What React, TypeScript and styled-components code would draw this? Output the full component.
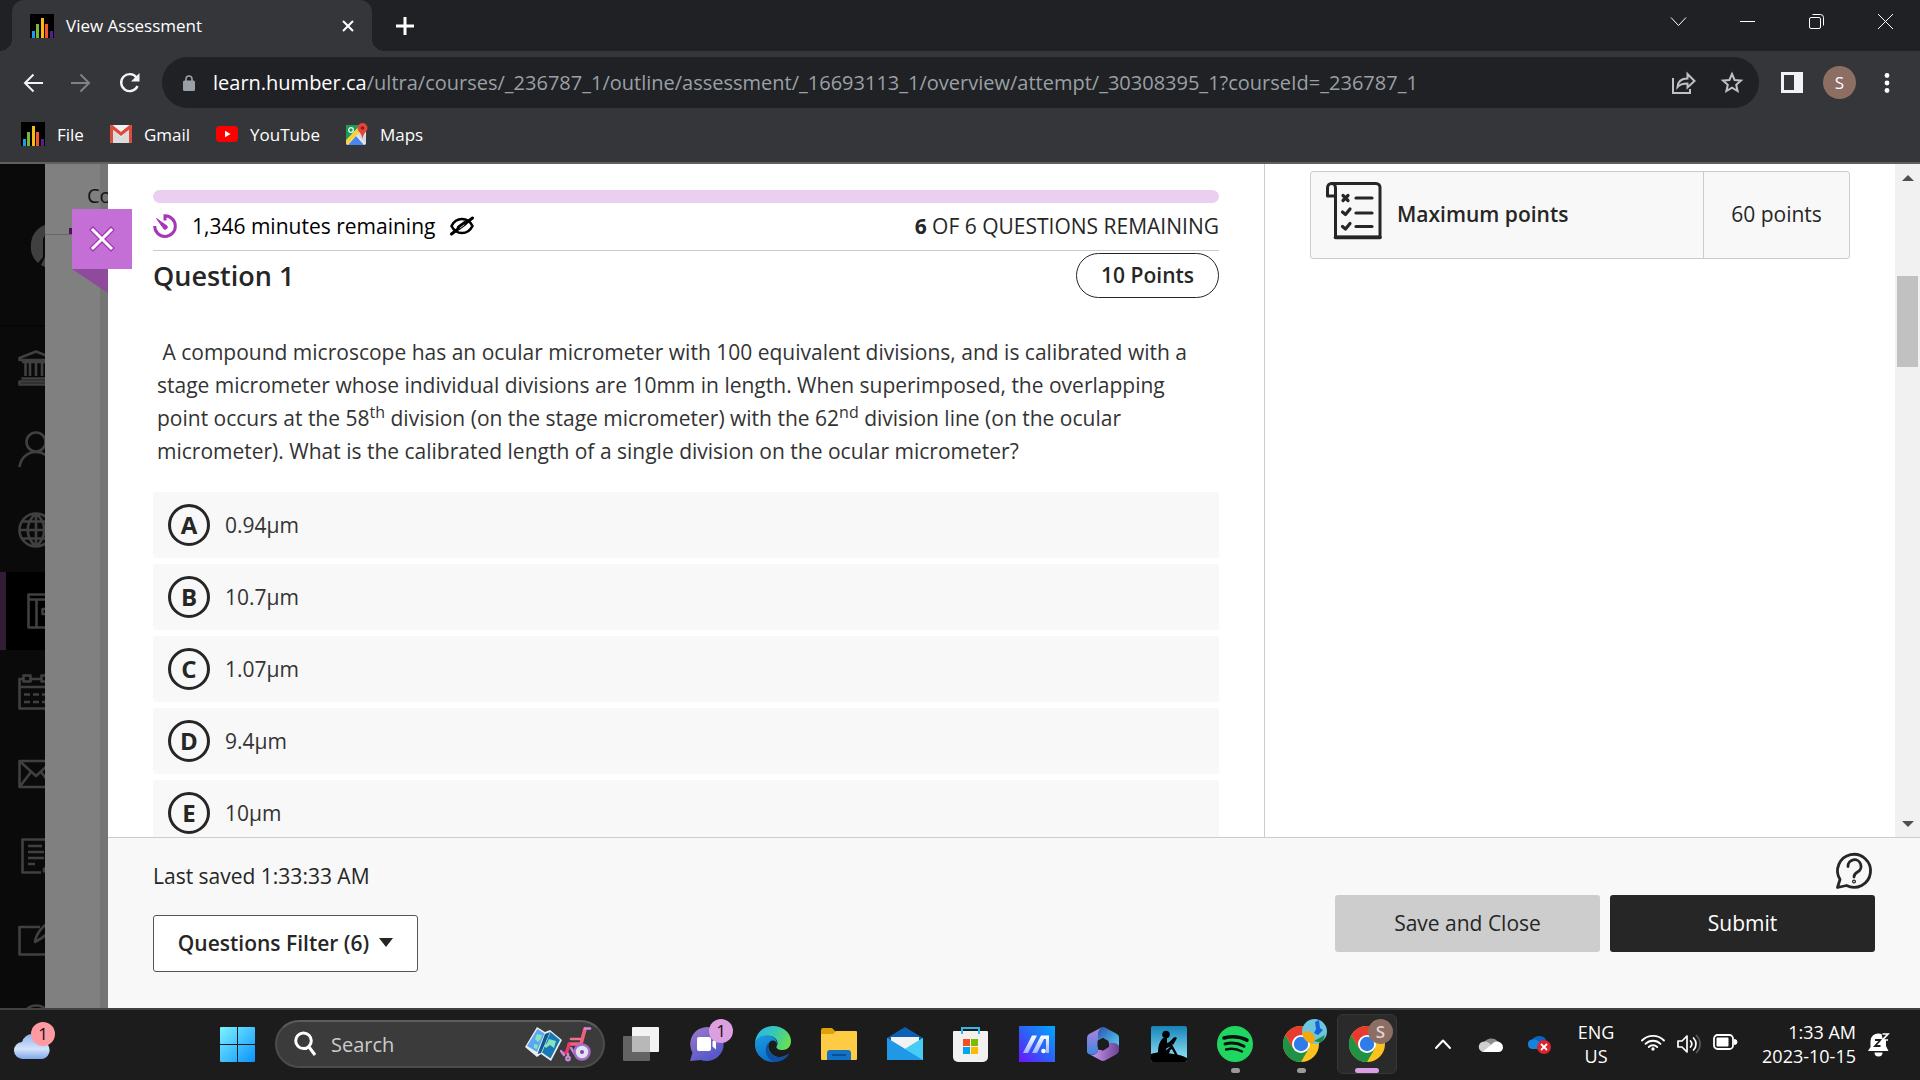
import React from "react";
import styled, { createGlobalStyle, css } from "styled-components";

const Global = createGlobalStyle`
  *, *::before, *::after { box-sizing: border-box; }
  html, body { margin: 0; padding: 0; }
  body { background: #1c1c1c; overflow: hidden; font-family: "Open Sans", "Noto Sans", sans-serif; }
  button { font: inherit; color: inherit; background: none; border: 0; padding: 0; cursor: pointer; }
  input { font: inherit; }
  a { color: inherit; text-decoration: none; }
  ul, ol, dl, dd, dt, h1, p { margin: 0; padding: 0; list-style: none; }
  svg { display: block; flex: none; overflow: visible; }
`;

/* ---------- layout ---------- */

const Screen = styled.div`
  display: flex;
  flex-direction: column;
  height: 100vh;
`;

/* ---------- browser chrome ---------- */

const TabStrip = styled.header`
  display: flex;
  justify-content: space-between;
  height: 51px;
  padding-left: 12px;
  background: #202124;
  color: #fff;
`;

const TabGroup = styled.div`
  display: flex;
`;

const Tab = styled.div`
  position: relative;
  display: flex;
  align-items: center;
  width: 360px;
  padding: 0 16px 0 18px;
  border-radius: 12px 12px 0 0;
  background: #35363a;
  font-size: 17px;

  &::before,
  &::after {
    content: "";
    position: absolute;
    bottom: 0;
    width: 12px;
    height: 12px;
  }
  &::before {
    right: 100%;
    background: radial-gradient(circle at 0 0, #202124 12px, #35363a 12px);
  }
  &::after {
    left: 100%;
    background: radial-gradient(circle at 100% 0, #202124 12px, #35363a 12px);
  }
`;

const TabTitle = styled.span`
  flex: 1;
  margin-left: 12px;
`;

const IconButton = styled.button<{ $w: number; $color?: string }>`
  display: flex;
  align-items: center;
  justify-content: center;
  flex: none;
  width: ${(p) => p.$w}px;
  color: ${(p) => p.$color ?? "inherit"};
`;

const WindowControls = styled.div`
  display: flex;
  padding-bottom: 8px;
`;

const Toolbar = styled.div`
  display: flex;
  align-items: center;
  height: 63px;
  padding: 0 9px;
  background: #35363a;
  color: #f1f3f4;
`;

const AddressBar = styled.div`
  display: flex;
  align-items: center;
  flex: 1;
  height: 51px;
  margin: 0 9px;
  padding: 0 3px 0 21px;
  border-radius: 26px;
  background: #202124;
  color: #9aa0a6;
`;

const Address = styled.div`
  flex: 1;
  margin-left: 18px;
  font-size: 20px;
  white-space: nowrap;

  b {
    font-weight: 400;
    color: #fff;
  }
`;

const Profile = styled.button`
  width: 33px;
  height: 33px;
  margin: 0 7px;
  border-radius: 50%;
  background: #8d6e63;
  font-size: 17px;
  color: #fff;
`;

const Bookmarks = styled.nav`
  display: flex;
  height: 50px;
  padding: 0 21px 8px;
  gap: 26px;
  border-bottom: 2px solid #5f6062;
  background: #35363a;
  color: #fff;
  font-size: 17px;
`;

const Bookmark = styled.a`
  display: flex;
  align-items: center;
  gap: 12px;
`;

/* ---------- course page ---------- */

const Page = styled.div`
  position: relative;
  display: flex;
  flex: 1;
  min-height: 0;
  overflow: hidden;
`;

const SideNav = styled.nav`
  flex: none;
  width: 45px;
  overflow: hidden;
  background: #0a0a0a;
  color: #404040;
`;

const SchoolLogo = styled.div`
  height: 163px;
  padding: 61px 0 0 31px;
  border-bottom: 2px solid #060606;
`;

const SideList = styled.ul<{ $row: number }>`
  li {
    display: flex;
    align-items: center;
    height: ${(p) => p.$row}px;
  }
`;

const SideLink = styled.a<{ $active?: boolean }>`
  display: flex;
  align-items: center;
  width: 100px;
  height: 78px;
  padding-left: 18px;
  ${(p) =>
    p.$active &&
    css`
      padding-left: 12px;
      border-left: 6px solid #321d36;
      background: #000;
    `}
`;

const Backdrop = styled.div`
  flex: none;
  width: 63px;
  overflow: hidden;
  background: linear-gradient(to left, #757575 8px, #808080 8px);
`;

const BackdropTabs = styled.div`
  height: 71px;
  padding: 18px 0 0 42px;
  border-bottom: 1px solid #666;
  font-size: 20px;
  line-height: 28px;
  color: #131313;
  white-space: nowrap;

  &::after {
    content: "";
    display: block;
    width: 36px;
    height: 6px;
    margin: 18px 0 0 -18px;
    background: #4f1259;
  }
`;

const ClosePanel = styled.button`
  position: absolute;
  top: 45px;
  left: 72px;
  display: flex;
  align-items: center;
  justify-content: center;
  width: 60px;
  height: 60px;
  background: #c46fd6;

  &::after {
    content: "";
    position: absolute;
    top: 100%;
    left: 0;
    border-top: 24px solid #8e4a9b;
    border-left: 36px solid transparent;
  }
`;

const Panel = styled.main`
  display: flex;
  flex-direction: column;
  flex: 1;
  min-width: 0;
  background: #fff;
  color: #262626;
`;

const PanelBody = styled.div`
  display: flex;
  flex: 1;
  min-height: 0;
`;

const Questions = styled.section`
  flex: 1;
  min-width: 0;
  padding: 26px 45px 0;
  overflow: hidden;
`;

const Progress = styled.div`
  height: 13px;
  border-radius: 7px;
  background: #ebcff0;
`;

const StatusRow = styled.div`
  display: flex;
  align-items: center;
  height: 48px;
  padding-bottom: 2px;
  border-bottom: 1px solid #ccc;
  font-size: 21px;
  color: #000;
`;

const TimeLeft = styled.span`
  margin: 0 15px;
`;

const Remaining = styled.span`
  margin-left: auto;
  color: #262626;

  b {
    font-weight: 700;
  }
`;

const QuestionHead = styled.div`
  display: flex;
  justify-content: space-between;
  align-items: center;
  margin-top: 2px;
`;

const QuestionTitle = styled.h1`
  font-size: 27px;
  line-height: 45px;
  font-weight: 600;
`;

const PointsPill = styled.span`
  padding: 0 24px;
  border: 1px solid #262626;
  border-radius: 23px;
  font-size: 21px;
  line-height: 43px;
  font-weight: 600;
`;

const Prompt = styled.p`
  margin: 38px 30px 0 4px;
  font-size: 21px;
  line-height: 33px;
  color: #333;

  sup {
    font-size: 16px;
    line-height: 0;
  }
`;

const Options = styled.div`
  display: grid;
  gap: 6px;
  margin-top: 24px;
`;

const Option = styled.label`
  display: flex;
  align-items: center;
  height: 66px;
  padding-left: 15px;
  border-radius: 3px;
  background: #f8f8f8;
  font-size: 21px;
  color: #333;
  cursor: pointer;
`;

const Radio = styled.input`
  appearance: none;
  width: 0;
  height: 0;
  margin: 0;
`;

const Letter = styled.span`
  display: grid;
  place-items: center;
  width: 42px;
  height: 42px;
  margin-right: 15px;
  border: 3px solid #262626;
  border-radius: 50%;
  font-size: 24px;
  line-height: 36px;
  font-weight: 700;
  color: #262626;
`;

const Details = styled.aside`
  flex: none;
  width: 631px;
  padding: 7px 45px 0;
  border-left: 1px solid #ccc;
`;

const PointsCard = styled.dl`
  display: flex;
  height: 88px;
  border: 1px solid #ccc;
  border-radius: 3px;
  background: #f8f8f8;
  font-size: 21px;

  dt {
    display: flex;
    align-items: center;
    gap: 15px;
    flex: 1;
    padding: 0 0 2px 15px;
    font-weight: 600;
  }
  dd {
    display: grid;
    place-items: center;
    width: 146px;
    padding-bottom: 2px;
    border-left: 1px solid #ccc;
  }
`;

const ChecklistIcon = styled.svg`
  align-self: flex-start;
  margin-top: 10px;
`;

const ScrollTrack = styled.div`
  display: flex;
  flex-direction: column;
  justify-content: space-between;
  flex: none;
  width: 25px;
  background: #f1f1f1;
`;

const ScrollArrow = styled.button`
  display: grid;
  place-items: center;
  height: 27px;
`;

const ScrollThumb = styled.div`
  width: 21px;
  height: 91px;
  margin: 85px 2px auto;
  background: #c1c1c1;
`;

const Footer = styled.footer`
  display: flex;
  justify-content: space-between;
  height: 171px;
  padding: 15px 45px 0;
  border-top: 1px solid #ccc;
  background: #f8f8f8;
  font-size: 21px;
`;

const FooterStart = styled.div`
  padding-top: 7px;
`;

const Saved = styled.p`
  margin-bottom: 23px;
  line-height: 32px;
`;

const FooterButton = styled.button<{ $look: "outline" | "grey" | "dark" }>`
  display: flex;
  align-items: center;
  justify-content: center;
  gap: 10px;
  width: 265px;
  height: 57px;
  padding-bottom: 2px;
  border-radius: 3px;
  ${(p) => p.$look === "outline" && css`border: 1px solid #555; background: #fff; font-weight: 600;`}
  ${(p) => p.$look === "grey" && css`background: #cdcdcd;`}
  ${(p) => p.$look === "dark" && css`background: #262626; color: #fff;`}
`;

const FooterEnd = styled.div`
  display: flex;
  flex-direction: column;
  align-items: flex-end;
  gap: 6px;
`;

const HelpButton = styled.button`
  margin-right: 3px;
`;

const Actions = styled.div`
  display: flex;
  gap: 10px;
`;

/* ---------- taskbar ---------- */

const Taskbar = styled.footer`
  display: flex;
  align-items: center;
  flex: none;
  height: 72px;
  padding: 0 30px 2px 14px;
  border-top: 2px solid #414141;
  background: #1c1c1c;
  color: #fff;
`;

const Weather = styled.button`
  position: relative;
  margin-right: 168px;
`;

const Badge = styled.span<{ $color: string; $side: number }>`
  position: absolute;
  top: -7px;
  right: ${(p) => p.$side}px;
  width: 24px;
  height: 24px;
  border-radius: 50%;
  background: ${(p) => p.$color};
  font-size: 17px;
  line-height: 24px;
  text-align: center;
  color: #111;
`;

const SearchBox = styled.label`
  display: flex;
  align-items: center;
  width: 330px;
  height: 48px;
  margin: 0 6px 0 20px;
  padding: 0 12px 0 17px;
  border: 2px solid #4c4c4c;
  border-top-color: #5c5c5c;
  border-radius: 24px;
  background: #3b3b3b;
`;

const SearchInput = styled.input`
  flex: 1;
  min-width: 0;
  margin-left: 15px;
  padding: 0;
  border: 0;
  outline: 0;
  background: none;
  font-size: 20px;
  color: #fff;

  &::placeholder {
    color: #ccc;
    opacity: 1;
  }
`;

const Apps = styled.div`
  display: flex;
  gap: 6px;
`;

const AppButton = styled.button<{ $active?: boolean; $running?: boolean }>`
  position: relative;
  display: grid;
  place-items: center;
  width: 60px;
  height: 60px;
  border: 1px solid transparent;
  border-radius: 6px;
  ${(p) => p.$active && css`border-color: #373737; background: #2a2a2a;`}

  &::after {
    content: "";
    position: absolute;
    bottom: 0;
    width: ${(p) => (p.$active ? 24 : 9)}px;
    height: 5px;
    border-radius: 3px;
    background: ${(p) => (p.$active ? "#dc9fe6" : p.$running ? "#9a9a9a" : "transparent")};
  }
`;

const AppIcon = styled.span`
  position: relative;
  display: block;
`;

const ProfileBadge = styled.span<{ $color: string }>`
  position: absolute;
  top: -7px;
  right: -8px;
  width: 25px;
  height: 25px;
  border-radius: 50%;
  overflow: hidden;
  background: ${(p) => p.$color};
  font-size: 17px;
  line-height: 25px;
  font-weight: 600;
  text-align: center;
  color: #e0d5d1;
`;

const Tray = styled.div`
  display: flex;
  align-items: center;
  margin-left: auto;
  font-size: 18px;
  line-height: 24px;
`;

const TrayButton = styled.button<{ $gap: number }>`
  display: flex;
  gap: 12px;
  margin-right: ${(p) => p.$gap}px;
`;

const Lang = styled.button`
  width: 40px;
  margin: 0 25px;
  text-align: center;
`;

const Clock = styled.button`
  margin-right: 12px;
  text-align: right;
`;

/* ---------- drawings ---------- */

const BarsIcon = () => (
  <svg width="24" height="24" viewBox="0 0 24 24">
    <rect width="24" height="24" fill="#000" />
    <rect x="2" y="17" width="3" height="7" fill="#1a9bef" />
    <rect x="6" y="10" width="3" height="14" fill="#7ab82e" />
    <rect x="11" y="4" width="3" height="20" fill="#fdb913" />
    <rect x="15" y="10" width="3" height="14" fill="#f2562a" />
    <rect x="20" y="17" width="3" height="7" fill="#5b1d87" />
  </svg>
);

const Line = ({ w, h, d, sw = 2, cap = "butt" }: { w: number; h: number; d: string; sw?: number; cap?: "butt" | "round" }) => (
  <svg width={w} height={h} viewBox={`0 0 ${w} ${h}`} fill="none" stroke="currentColor" strokeWidth={sw} strokeLinecap={cap} strokeLinejoin={cap === "round" ? "round" : "miter"}>
    <path d={d} />
  </svg>
);

const GmailIcon = () => (
  <svg width="22" height="18" viewBox="0 0 22 18">
    <rect width="22" height="18" rx="2" fill="#f1f1f1" />
    <path d="M3 18V5l8 7 8-7v13" fill="#dcdcdc" />
    <path d="M0 2v14a2 2 0 0 0 2 2h1V4.800l8 6.200 8-6.200V18h1a2 2 0 0 0 2-2V2c0-2-2-2.500-3-1.700L11 6.800 3 .3C2-.5 0 0 0 2z" fill="#dd4b3e" />
    <path d="M3 .3 11 6.800 19 .3z" fill="#f1f1f1" />
  </svg>
);

const YouTubeIcon = () => (
  <svg width="22" height="16" viewBox="0 0 22 16">
    <rect width="22" height="16" rx="4" fill="#f00" />
    <path d="M9 4.800v6.400L14.500 8z" fill="#fff" />
  </svg>
);

const MapsIcon = () => (
  <svg width="22" height="22" viewBox="0 0 22 22">
    <rect y="2" width="20" height="20" rx="2" fill="#e8eaed" />
    <path d="M0 4a2 2 0 0 1 2-2h12L0 18z" fill="#1a9c57" />
    <path d="M2 22 10 13l8 9z" fill="#4a86f0" />
    <path d="M0 17 13 4l3 3L1.500 21.500A2 2 0 0 1 0 20z" fill="#fbd13b" />
    <path d="M0 4a2 2 0 0 1 2-2h12L0 16z" fill="#1a9c57" />
    <path d="M11 12 20 21V13l-4-4z" fill="#d5d8dc" />
    <circle cx="5" cy="7" r="2.300" fill="none" stroke="#fff" strokeWidth="1.200" />
    <path d="M16.500 0a5 5 0 0 0-5 5c0 3.500 4.300 5 5 11 .7-6 5-7.500 5-11a5 5 0 0 0-5-5z" fill="#e5453a" />
    <circle cx="16.500" cy="5" r="1.800" fill="#8c1f17" />
  </svg>
);

const TimerIcon = () => (
  <svg width="24" height="24" viewBox="0 0 24 24" fill="none" stroke="#a636b8" strokeWidth="3">
    <path d="M12 6.500V1.800A10.300 10.300 0 1 1 1.700 12" />
    <path d="M3.500 4.500 14 12a2.200 2.200 0 0 1-3 3z" fill="#a636b8" strokeWidth="1" strokeLinejoin="round" />
  </svg>
);

const HiddenEyeIcon = () => (
  <svg width="24" height="18" viewBox="0 0 24 18" fill="none" stroke="#000" strokeWidth="2.600" strokeLinecap="round">
    <path d="M1.500 9C4 4 8 2 12 2s8 2 10.500 7C20 14 16 16 12 16S4 14 1.500 9z" />
    <path d="M1.500 17 22.500 1" strokeWidth="3" />
    <path d="M9 10.500 14.500 6.500" strokeWidth="4.500" />
    <path d="M10 11 14 8" stroke="#fff" strokeWidth=".8" />
  </svg>
);

const Checklist = () => (
  <ChecklistIcon width="56" height="57" viewBox="0 0 56 57" fill="none" stroke="#262626" strokeWidth="3" strokeLinejoin="round" strokeLinecap="round">
    <path d="M6 1.500H50a4 4 0 0 1 4 4V55H9.500V6c0-6-8-6-8 0v8h8" />
    <path d="M9.500 55.500H54" strokeWidth="3.600" />
    <path d="m17 13.500 5 5M22 13.500l-5 5M16.500 30l3 2.500 4.500-5.500M16.500 44.500l3 2.500 4.500-5.500" strokeWidth="3.200" />
    <path d="M30 16H46M30 31H46M30 44.500H46" strokeWidth="3.200" />
  </ChecklistIcon>
);

const HelpIcon = () => (
  <svg width="36" height="36" viewBox="0 0 36 36" fill="none" stroke="#262626" strokeWidth="2.800" strokeLinecap="round" strokeLinejoin="round">
    <path d="M1.500 34.500 4 26.500A16.500 16.500 0 1 1 10.500 32.500z" />
    <path d="M12 13.500a6.500 6.500 0 1 1 9.500 5.500c-2.500 1.300-3.500 2-3.500 5" />
    <circle cx="18" cy="28.500" r=".6" />
  </svg>
);

const WeatherIcon = () => (
  <svg width="38" height="30" viewBox="0 0 38 30">
    <defs>
      <linearGradient id="cloud" x1="0" y1="0" x2="0" y2="1">
        <stop offset="0" stopColor="#8fb2ee" />
        <stop offset=".6" stopColor="#d3e3fb" />
        <stop offset="1" stopColor="#7fa6ea" />
      </linearGradient>
    </defs>
    <path d="M9 30a8.500 8.500 0 0 1-1-17A11 11 0 0 1 29 12.500 9 9 0 0 1 28.500 30z" fill="url(#cloud)" />
  </svg>
);

const StartIcon = () => (
  <svg width="35" height="35" viewBox="0 0 35 35">
    <defs>
      <linearGradient id="win" x1="0" y1="0" x2="1" y2="1">
        <stop offset="0" stopColor="#7df2ff" />
        <stop offset="1" stopColor="#0a93ff" />
      </linearGradient>
    </defs>
    <path d="M1 0H17V17H0V1a1 1 0 0 1 1-1zM18 0H34a1 1 0 0 1 1 1V17H18zM0 18H17V35H1a1 1 0 0 1-1-1zM18 18H35V34a1 1 0 0 1-1 1H18z" fill="url(#win)" />
  </svg>
);

const SearchArt = () => (
  <svg width="66" height="36" viewBox="0 0 66 36">
    <path d="M12 1 20 6 25 4 37 14 26 35 16 28 12 31 0 21z" fill="#e9eef0" />
    <path d="M12.500 3 19.500 7.500 12 26 2 20z" fill="#5ba7f5" />
    <path d="M20 8 25 6 16 27 12.500 28z" fill="#0c5a8e" />
    <path d="M25.500 6 35 14 25.500 32.500 17 26.500z" fill="#1678b5" />
    <path d="m12 8 5 1-1 4-3 3-3-3zM9 18l4 1-1 4-3-1zM24 13l7 2-2 7-4-3-4 3-2-2 3-3z" fill="#86e3ba" />
    <g fill="none" strokeLinecap="round" strokeLinejoin="round">
      <path d="M60 3 56 18H45" stroke="#f1607f" strokeWidth="3.600" />
      <path d="M46 13H55" stroke="#f3718c" strokeWidth="2.600" />
      <path d="M60 2.500H65" stroke="#d389de" strokeWidth="2.600" />
      <path d="M44 18 41.500 27H38" stroke="#f3366c" strokeWidth="3.200" />
      <path d="M46 22 49 27M36 25 39 29M43 28V30" stroke="#c58bdb" strokeWidth="2.400" />
      <circle cx="57" cy="26" r="7.500" fill="#dfe3f2" stroke="#a76bc4" strokeWidth="2.500" />
      <circle cx="57" cy="26" r="2" fill="#7d45a5" stroke="none" />
      <circle cx="43" cy="32.500" r="1.800" stroke="#c58bdb" strokeWidth="2.200" />
    </g>
  </svg>
);

const TaskViewIcon = () => (
  <svg width="36" height="36" viewBox="0 0 36 36">
    <rect x="9" y="1" width="27" height="25" rx="1" fill="#f3f3f3" />
    <rect y="10" width="27" height="25" rx="1" fill="#636363" />
    <path d="M9 10H27V26H9z" fill="#b8b8b8" />
  </svg>
);

const ChatIcon = () => (
  <svg width="36" height="36" viewBox="0 0 36 36">
    <defs>
      <linearGradient id="chat" x1="0" y1="0" x2=".6" y2="1">
        <stop offset="0" stopColor="#a07ac8" />
        <stop offset="1" stopColor="#5257c9" />
      </linearGradient>
    </defs>
    <path d="M18 1a17 17 0 1 1-6 33L1 35l2.500-8.500A17 17 0 0 1 18 1z" fill="url(#chat)" />
    <rect x="8" y="11" width="14" height="14" rx="2" fill="#fff" />
    <path d="M23.500 15.500 27 12.500v11l-3.500-3z" fill="#fff" />
  </svg>
);

const EdgeIcon = () => (
  <svg width="36" height="36" viewBox="0 0 36 36">
    <defs>
      <linearGradient id="edgeTop" x1="0" y1=".3" x2="1" y2=".6">
        <stop offset="0" stopColor="#2eb6ea" />
        <stop offset=".5" stopColor="#35c9b5" />
        <stop offset="1" stopColor="#6be04b" />
      </linearGradient>
      <linearGradient id="edgeLow" x1="0" y1="0" x2=".6" y2="1">
        <stop offset="0" stopColor="#1b9de2" />
        <stop offset="1" stopColor="#0a68c4" />
      </linearGradient>
    </defs>
    <path d="M0 17C1 6 9 0 18 0c10 0 18 7 18 15 0 6-4 9-8.500 9-5 0-6.500-2-6-3.500C24 17 22 11 15 10 8 9 2 12 0 17z" fill="url(#edgeTop)" />
    <path d="M0 18C1 11 8 8 15 10c5 1 7 4 7 8-1-4-6-5-8-1-3 7 4 14 11 14 4 0 7-2 9-3-3 5-9 8-16 8C7 36-.5 27 0 18z" fill="url(#edgeLow)" />
    <path d="M14 16.500c-2 4-1 9 3 12 5 4 11 3 17-1-3 5-8 8.500-14 8-9-1-12-14-6-19z" fill="#114f9f" />
  </svg>
);

const ExplorerIcon = () => (
  <svg width="36" height="36" viewBox="0 0 36 36">
    <path d="M0 4a2 2 0 0 1 2-2H11l4 4v6H0z" fill="#e0a008" />
    <path d="M0 8H12l3-3H35a1 1 0 0 1 1 1V33a1 1 0 0 1-1 1H1a1 1 0 0 1-1-1z" fill="#fdcb44" />
    <path d="M6 34V27a3 3 0 0 1 3-3H27a3 3 0 0 1 3 3v7z" fill="#1272c6" />
    <path d="M11 29H25" stroke="#0a4f94" strokeWidth="2" />
  </svg>
);

const MailIcon = () => (
  <svg width="36" height="36" viewBox="0 0 36 36">
    <path d="M0 12 18 1 36 12V22H0z" fill="#0b5fb5" />
    <path d="M4 11H32V24H4z" fill="#f2f2f2" />
    <path d="M0 12 18 23 36 12V34H0z" fill="#2fb6f2" />
    <path d="M0 12 36 34H0z" fill="#1f98e6" />
    <path d="M36 12 18 23 36 34z" fill="#45cdf6" />
  </svg>
);

const StoreIcon = () => (
  <svg width="36" height="36" viewBox="0 0 36 36">
    <path d="M0 6a1 1 0 0 1 1-1H34a1 1 0 0 1 1 1V31a5 5 0 0 1-5 5H5a5 5 0 0 1-5-5z" fill="#f1f1f1" />
    <path d="M9 8V2H26V8" fill="none" stroke="#2fb9e6" strokeWidth="2" />
    <path d="M10 13h7v7h-7z" fill="#f25022" />
    <path d="M18 13h7v7h-7z" fill="#7fba00" />
    <path d="M10 21h7v7h-7z" fill="#00a4ef" />
    <path d="M18 21h7v7h-7z" fill="#ffb900" />
  </svg>
);

const MyAsusIcon = () => (
  <svg width="36" height="36" viewBox="0 0 36 36">
    <defs>
      <linearGradient id="asus" x1="0" y1="1" x2="1" y2="0">
        <stop offset="0" stopColor="#6a14ff" />
        <stop offset=".5" stopColor="#2c62f5" />
        <stop offset="1" stopColor="#00a8ff" />
      </linearGradient>
      <linearGradient id="asusMark" x1="0" y1="0" x2="0" y2="1">
        <stop offset="0" stopColor="#fff" />
        <stop offset="1" stopColor="#9db4ff" />
      </linearGradient>
    </defs>
    <rect width="36" height="36" fill="url(#asus)" />
    <path d="M4 27 13 9.500H18L9 27zM13 27 22 9.500H30V27H27V13H25L18 27z" fill="url(#asusMark)" />
    <circle cx="24.500" cy="25" r="2.300" fill="#fff" />
  </svg>
);

const OfficeIcon = () => (
  <svg width="36" height="36" viewBox="0 0 36 36">
    <defs>
      <linearGradient id="offA" x1="0" y1="0" x2="0" y2="1">
        <stop offset="0" stopColor="#b682dd" />
        <stop offset="1" stopColor="#3e86e0" />
      </linearGradient>
      <linearGradient id="offB" x1="0" y1="0" x2="1" y2="1">
        <stop offset="0" stopColor="#2a50a8" />
        <stop offset="1" stopColor="#58d5fb" />
      </linearGradient>
      <linearGradient id="offC" x1="0" y1="0" x2="1" y2="0">
        <stop offset="0" stopColor="#cf9cf5" />
        <stop offset="1" stopColor="#6b4394" />
      </linearGradient>
    </defs>
    <path d="M16 1.500a5 5 0 0 1 4 0L32 8a4 4 0 0 1 2 4V22L24 17 18 12l-6 3V4z" fill="url(#offB)" />
    <path d="M34 20v4a4 4 0 0 1-2 4L20 34.500a5 5 0 0 1-4 0L5 28.500c4 1 8-1 8-5l5 1 6-4V17c4-1 9 0 10 3z" fill="url(#offC)" />
    <path d="M17 1.200 4 8a5 5 0 0 0-2 4V24a4 4 0 0 0 3 4.500c5 1 8-2 8-5V8c0-3 2-6 4-6.800z" fill="url(#offA)" />
    <path d="M18 12 23.500 15v6L18 24.500 12.500 21V15z" fill="#1c1c1c" />
  </svg>
);

const KindleIcon = () => (
  <svg width="36" height="36" viewBox="0 0 36 36">
    <defs>
      <linearGradient id="kindle" x1="0" y1="0" x2="0" y2="1">
        <stop offset="0" stopColor="#1583b8" />
        <stop offset="1" stopColor="#9beafb" />
      </linearGradient>
    </defs>
    <rect width="36" height="36" rx="2" fill="url(#kindle)" />
    <path d="M0 28c5-2 12-2 17-1s14 2 19 5v2a2 2 0 0 1-2 2H2a2 2 0 0 1-2-2z" fill="#000" />
    <circle cx="15" cy="8.500" r="3.800" />
    <path d="M12 12c-4 4-5 9-5 15H18l1-2-4-1 1-4 4-2-1-2-3 1V12z" fill="#000" />
    <path d="M11 23 20 19 26 30M21 21 14 27M18 18 24 12" fill="none" stroke="#000" strokeWidth="2.400" />
    <path d="m19 16 5-5 2 1-4 7z" fill="#000" />
  </svg>
);

const SpotifyIcon = () => (
  <svg width="36" height="36" viewBox="0 0 36 36">
    <circle cx="18" cy="18" r="18" fill="#1fd760" />
    <g fill="none" stroke="#111" strokeLinecap="round">
      <path d="M7 12c8-2 16-1.500 23 2.200" strokeWidth="3.600" />
      <path d="M8 18c7-1.800 13-1 19 2.200" strokeWidth="3" />
      <path d="M9 23.500c6-1.500 11-.8 16 2" strokeWidth="2.400" />
    </g>
  </svg>
);

const ChromeIcon = () => (
  <svg width="36" height="36" viewBox="0 0 36 36">
    <circle cx="18" cy="18" r="18" fill="#fcc31e" />
    <path d="M18 18 10.200 22.500 2.400 9A18 18 0 0 0 18 36L25.800 22.500z" fill="#1f9246" />
    <path d="M2.400 9A18 18 0 0 1 33.600 9H18L10.200 22.500z" fill="#e63b2e" />
    <circle cx="18" cy="18" r="9" fill="#fff" />
    <circle cx="18" cy="18" r="7.200" fill="#2f7bea" />
  </svg>
);

const CloudIcon = () => (
  <svg width="24" height="16" viewBox="0 0 24 16">
    <path d="M5 7a8 7.500 0 0 1 14-1l-8 6z" fill="#8d8d8d" />
    <path d="M5 16a5 5 0 0 1 0-10.500c3-.5 5 1 7 3L7 16z" fill="#cfcfcf" />
    <path d="M4 15.500 13 8c4-5 11-2 11 3.500a4.500 4.500 0 0 1-4.500 4.500H5z" fill="#fff" />
  </svg>
);

const OneDriveErrorIcon = () => (
  <svg width="24" height="20" viewBox="0 0 24 20">
    <path d="M5 6.500A8 7.500 0 0 1 19 5.500l-6 6z" fill="#0b64bd" />
    <path d="M5 15A4.800 4.800 0 0 1 5 5.500c6-1 8 4 12 9.500z" fill="#1583dc" />
    <circle cx="17" cy="13" r="7" fill="#d9252f" />
    <path d="m14 10 6 6M20 10l-6 6" stroke="#fff" strokeWidth="1.800" />
  </svg>
);

const WifiIcon = () => (
  <svg width="24" height="17" viewBox="0 0 24 17" fill="none" stroke="#fff" strokeWidth="1.900" strokeLinecap="round">
    <path d="M1 6.500a15.500 15.500 0 0 1 22 0M4.500 9.800a10.600 10.600 0 0 1 15 0M7.800 13a6 6 0 0 1 8.400 0" />
    <circle cx="12" cy="15" r="1.700" fill="#fff" stroke="none" />
  </svg>
);

const VolumeIcon = () => (
  <svg width="24" height="20" viewBox="0 0 24 20" fill="none" stroke="#fff" strokeWidth="1.700" strokeLinecap="round" strokeLinejoin="round">
    <path d="M1 7H5L10 2V18L5 13H1z" />
    <path d="M13.500 7a4.500 4.500 0 0 1 0 6M16.500 4a8.500 8.500 0 0 1 0 12" />
    <path d="M19.500 1.500a12 12 0 0 1 0 17" stroke="#5a5a5a" />
  </svg>
);

const BatteryIcon = () => (
  <svg width="24" height="16" viewBox="0 0 24 16">
    <rect x="1" y="1" width="19" height="14" rx="3.500" fill="none" stroke="#fff" strokeWidth="1.800" />
    <rect x="3.500" y="3.500" width="12" height="9" rx="1" fill="#fff" />
    <path d="M21.500 5.500a2.500 2.500 0 0 1 0 5z" fill="#fff" stroke="#fff" />
  </svg>
);

const BellIcon = () => (
  <svg width="22" height="24" viewBox="0 0 22 24">
    <path d="M2.500 9a7.500 7.500 0 0 1 8-7.500C15 1.500 18 5 18 9v5l2.500 5H0l2.500-4z" fill="#fff" />
    <path d="M6.500 20.500h8a4 4 0 0 1-8 0z" fill="#fff" />
    <path d="M7 8h5.500L7 14h5.500" fill="none" stroke="#1c1c1c" strokeWidth="1.800" />
    <path d="M13 0h8v8h-6z" fill="#1c1c1c" />
    <path d="M14.500 2H20l-5.500 6H20" fill="none" stroke="#fff" strokeWidth="1.700" />
  </svg>
);

const Side = ({ children }: { children: React.ReactNode }) => (
  <svg width="36" height="36" viewBox="0 0 36 36" fill="none" stroke="currentColor" strokeWidth="2.600" strokeLinejoin="round">
    {children}
  </svg>
);

const upperNav = [
  { name: "Institution", art: <path d="M1.500 8 18 1.500 34.500 8v2h-33zM4 12H32M7.500 13V26M12 13V26M18 13V26M24 13V26M29 13V26M3.500 28.500H33M1.500 34.500V31.500H34.500V34.500z" /> },
  { name: "Profile", art: <path d="M18 1.500a9.500 9.500 0 1 1 0 19 9.500 9.500 0 0 1 0-19zM1.500 36C3 26 10 21 18 21s15 5 16.500 15" /> },
  { name: "Activity", art: <path d="M18 1.500a16.500 16.500 0 1 1 0 33 16.500 16.500 0 0 1 0-33zM18 1.500V34.500M1.500 18H34.500M4 9.500H32M4 26.500H32M18 1.500c-11 9-11 24 0 33M18 1.500c11 9 11 24 0 33" /> },
  { name: "Courses", active: true, art: <path d="M10.500 1.500H38V34.500H10.500zM10.500 6.500H38M18.500 7V34.500M38 16H24.500V21H38" /> },
];

const lowerNav = [
  { name: "Calendar", art: <path d="M5 5H1.500V34.500H34.500V5H31M12 5h11M1.500 13H34.500M5.500 1.500h7v6h-7zM23.500 1.500h7v6h-7zM6 20.500h6M15 20.500h6M24 20.500h6M6 28h6M15 28h6M24 28h6" /> },
  { name: "Messages", art: <path d="M1.500 5H34.500V31H1.500zM1.500 5 18 20 34.500 5M1.500 31 13 16M34.500 31 23 16" /> },
  { name: "Grades", art: <path d="M23 34.500H4.500V1.500H33V24M10 8H24M10 14H26M10 20H26M10 26H17M26 34.500V31l9-7" /> },
  { name: "Tools", art: <path d="M22 7H1.500V34.500H30V22M17 22C18 14 24 6 32 2l3 3C32 12 25 18 17 22z" /> },
  { name: "Sign Out", art: <path d="M8 8c5-6 16-6 20 0M8 30c5 6 16 6 20 0" /> },
];

const answers = [
  ["A", "0.94µm"],
  ["B", "10.7µm"],
  ["C", "1.07µm"],
  ["D", "9.4µm"],
  ["E", "10µm"],
];

export default function App() {
  return (
    <Screen>
      <Global />
      <TabStrip>
        <TabGroup>
          <Tab>
            <BarsIcon />
            <TabTitle>View Assessment</TabTitle>
            <IconButton $w={16} aria-label="Close tab"><Line w={12} h={12} d="M1 1 11 11M11 1 1 11" /></IconButton>
          </Tab>
          <IconButton $w={66} aria-label="New tab"><Line w={18} h={18} sw={3} d="M9 0V18M0 9H18" /></IconButton>
        </TabGroup>
        <WindowControls>
          <IconButton $w={69} aria-label="Search tabs"><Line w={15} h={9} sw={1} d="M0 .5 7.500 8.500 15 .5" /></IconButton>
          <IconButton $w={69} aria-label="Minimize"><Line w={15} h={1} sw={1} d="M0 .5H15" /></IconButton>
          <IconButton $w={69} aria-label="Restore"><Line w={15} h={15} sw={1} d="M2 3.500h8a1.500 1.500 0 0 1 1.500 1.500v8a1.500 1.500 0 0 1-1.500 1.500H2A1.500 1.500 0 0 1 .5 13V5A1.500 1.500 0 0 1 2 3.500zM3.500 .5H11.500a3 3 0 0 1 3 3V11.500" /></IconButton>
          <IconButton $w={69} aria-label="Close window"><Line w={15} h={15} sw={1} d="M0 0 15 15M15 0 0 15" /></IconButton>
        </WindowControls>
      </TabStrip>
      <Toolbar>
        <IconButton $w={48} aria-label="Back"><Line w={20} h={18} sw={2} d="M20 9H2M10.500 .5 2 9 10.500 17.500" /></IconButton>
        <IconButton $w={48} $color="#808185" aria-label="Forward"><Line w={20} h={18} sw={2} d="M0 9H18M9.500 .5 18 9 9.500 17.500" /></IconButton>
        <IconButton $w={48} aria-label="Reload">
          <svg width="21" height="20" viewBox="0 0 21 20">
            <path d="M17.500 4.500A8.500 8.500 0 1 0 18.500 13" fill="none" stroke="currentColor" strokeWidth="2.400" />
            <path d="M20.500 0V8.500H12z" fill="currentColor" />
          </svg>
        </IconButton>
        <AddressBar>
          <svg width="12" height="16" viewBox="0 0 12 16">
            <path d="M3 7V4a3 3 0 0 1 6 0V7" fill="none" stroke="#9aa0a6" strokeWidth="1.600" />
            <rect y="5.500" width="12" height="10.500" rx="1.500" fill="#9aa0a6" />
          </svg>
          <Address><b>learn.humber.ca</b>/ultra/courses/_236787_1/outline/assessment/_16693113_1/overview/attempt/_30308395_1?courseId=_236787_1</Address>
          <IconButton $w={48} $color="#c0c1c3" aria-label="Share"><Line w={24} h={22} sw={2} d="M1 6V21H18V17M5.500 15C6 9 9.500 6.500 15.500 6.500V2L22.500 9 15.500 15.500V11.500C11 11.500 8 12 5.500 15z" /></IconButton>
          <IconButton $w={48} $color="#c0c1c3" aria-label="Bookmark"><Line w={22} h={21} sw={2} d="M11 2 13.600 8 20 8.600 15.200 12.800 16.600 19 11 15.700 5.400 19 6.800 12.800 2 8.600 8.400 8z" /></IconButton>
        </AddressBar>
        <IconButton $w={48} aria-label="Side panel">
          <svg width="22" height="21" viewBox="0 0 22 21"><path d="M0 0H22V21H0zM3 3V18H13V3z" fill="#f1f3f4" fillRule="evenodd" /></svg>
        </IconButton>
        <Profile>S</Profile>
        <IconButton $w={48} aria-label="Menu">
          <svg width="6" height="20" viewBox="0 0 6 20" fill="#fff"><circle cx="3" cy="2.500" r="2.400" /><circle cx="3" cy="10" r="2.400" /><circle cx="3" cy="17.500" r="2.400" /></svg>
        </IconButton>
      </Toolbar>
      <Bookmarks>
        <Bookmark href="#"><BarsIcon />File</Bookmark>
        <Bookmark href="#"><GmailIcon />Gmail</Bookmark>
        <Bookmark href="#"><YouTubeIcon />YouTube</Bookmark>
        <Bookmark href="#"><MapsIcon />Maps</Bookmark>
      </Bookmarks>

      <Page>
        <SideNav>
          <SchoolLogo>
            <svg width="42" height="42" viewBox="0 0 42 42"><path d="M0 20A21 21 0 0 1 14 0V10L12 14V32L7 38A21 21 0 0 1 0 20zM10 40 14 32V42z" fill="#404040" /></svg>
          </SchoolLogo>
          <SideList $row={81}>
            {upperNav.map((n) => (
              <li key={n.name}><SideLink href="#" aria-label={n.name} $active={n.active}><Side>{n.art}</Side></SideLink></li>
            ))}
          </SideList>
          <SideList $row={82}>
            {lowerNav.map((n) => (
              <li key={n.name}><SideLink href="#" aria-label={n.name}><Side>{n.art}</Side></SideLink></li>
            ))}
          </SideList>
        </SideNav>
        <Backdrop><BackdropTabs>Co</BackdropTabs></Backdrop>
        <Panel>
          <PanelBody>
            <Questions>
              <Progress />
              <StatusRow>
                <TimerIcon />
                <TimeLeft>1,346 minutes remaining</TimeLeft>
                <button aria-label="Hide time"><HiddenEyeIcon /></button>
                <Remaining><b>6</b> OF 6 QUESTIONS REMAINING</Remaining>
              </StatusRow>
              <QuestionHead>
                <QuestionTitle>Question 1</QuestionTitle>
                <PointsPill>10 Points</PointsPill>
              </QuestionHead>
              <Prompt>
                &nbsp;A compound microscope has an ocular micrometer with 100 equivalent divisions, and is calibrated with a stage micrometer whose individual divisions are 10mm in length. When superimposed, the overlapping point occurs at the 58<sup>th</sup> division (on the stage micrometer) with the 62<sup>nd</sup> division line (on the ocular micrometer). What is the calibrated length of a single division on the ocular micrometer?
              </Prompt>
              <Options>
                {answers.map(([k, text]) => (
                  <Option key={k}>
                    <Radio type="radio" name="answer" />
                    <Letter>{k}</Letter>
                    {text}
                  </Option>
                ))}
              </Options>
            </Questions>
            <Details>
              <PointsCard>
                <dt><Checklist />Maximum points</dt>
                <dd>60 points</dd>
              </PointsCard>
            </Details>
            <ScrollTrack>
              <ScrollArrow aria-label="Scroll up"><svg width="12" height="6" viewBox="0 0 12 6"><path d="M0 6 6 0 12 6z" fill="#505050" /></svg></ScrollArrow>
              <ScrollThumb />
              <ScrollArrow aria-label="Scroll down"><svg width="12" height="6" viewBox="0 0 12 6"><path d="M0 0 6 6 12 0z" fill="#505050" /></svg></ScrollArrow>
            </ScrollTrack>
          </PanelBody>
          <Footer>
            <FooterStart>
              <Saved>Last saved 1:33:33 AM</Saved>
              <FooterButton $look="outline">
                Questions Filter (6)
                <svg width="14" height="9" viewBox="0 0 14 9"><path d="M0 0H14L7 9z" fill="#262626" /></svg>
              </FooterButton>
            </FooterStart>
            <FooterEnd>
              <HelpButton aria-label="Help"><HelpIcon /></HelpButton>
              <Actions>
                <FooterButton $look="grey">Save and Close</FooterButton>
                <FooterButton $look="dark">Submit</FooterButton>
              </Actions>
            </FooterEnd>
          </Footer>
        </Panel>
        <ClosePanel aria-label="Close assessment">
          <svg width="26" height="26" viewBox="0 0 26 26" strokeLinecap="square">
            <path d="M4 4 22 22M22 4 4 22" stroke="#a636b8" strokeWidth="5.500" />
            <path d="M4 4 22 22M22 4 4 22" stroke="#fff" strokeWidth="3" />
          </svg>
        </ClosePanel>
      </Page>

      <Taskbar>
        <Weather aria-label="Weather"><WeatherIcon /><Badge $color="#ff9aa2" $side={-3}>1</Badge></Weather>
        <button aria-label="Start"><StartIcon /></button>
        <SearchBox>
          <Line w={22} h={26} sw={3} d="M9.500 2a7.800 7.800 0 1 1 0 15.600a7.800 7.800 0 0 1 0-15.600M15 16 21 24" />
          <SearchInput type="text" placeholder="Search" aria-label="Search" />
          <SearchArt />
        </SearchBox>
        <Apps>
          <AppButton aria-label="Task view"><TaskViewIcon /></AppButton>
          <AppButton aria-label="Chat"><AppIcon><ChatIcon /><Badge $color="#dc9fe0" $side={-8}>1</Badge></AppIcon></AppButton>
          <AppButton aria-label="Edge"><EdgeIcon /></AppButton>
          <AppButton aria-label="File Explorer"><ExplorerIcon /></AppButton>
          <AppButton aria-label="Mail"><MailIcon /></AppButton>
          <AppButton aria-label="Store"><StoreIcon /></AppButton>
          <AppButton aria-label="MyASUS"><MyAsusIcon /></AppButton>
          <AppButton aria-label="Microsoft 365"><OfficeIcon /></AppButton>
          <AppButton aria-label="Kindle"><KindleIcon /></AppButton>
          <AppButton aria-label="Spotify" $running><SpotifyIcon /></AppButton>
          <AppButton aria-label="Chrome" $running>
            <AppIcon>
              <ChromeIcon />
              <ProfileBadge $color="#6cc6de">
                <svg width="25" height="25" viewBox="0 0 25 25">
                  <path d="M0 14c3-3 8-2 11 1s2 8-1 10H3z" fill="#f5a70c" />
                  <path d="M13 3l4-2 1 8 3 2-5 5-4-2 2-4z" fill="#1764d8" />
                  <path d="m12 22 11-6-3 8z" fill="#1d8a3e" />
                </svg>
              </ProfileBadge>
            </AppIcon>
          </AppButton>
          <AppButton aria-label="Chrome, second profile" $active><AppIcon><ChromeIcon /><ProfileBadge $color="#8d6e63">S</ProfileBadge></AppIcon></AppButton>
        </Apps>
        <Tray>
          <TrayButton $gap={28} aria-label="Hidden icons"><Line w={16} h={10} sw={2} cap="round" d="M1 9 8 1.500 15 9" /></TrayButton>
          <TrayButton $gap={24} aria-label="OneDrive"><CloudIcon /></TrayButton>
          <TrayButton $gap={0} aria-label="OneDrive error"><OneDriveErrorIcon /></TrayButton>
          <Lang>ENG<br />US</Lang>
          <TrayButton $gap={25} aria-label="Quick settings"><WifiIcon /><VolumeIcon /><BatteryIcon /></TrayButton>
          <Clock>1:33 AM<br />2023-10-15</Clock>
          <button aria-label="Notifications"><BellIcon /></button>
        </Tray>
      </Taskbar>
    </Screen>
  );
}
